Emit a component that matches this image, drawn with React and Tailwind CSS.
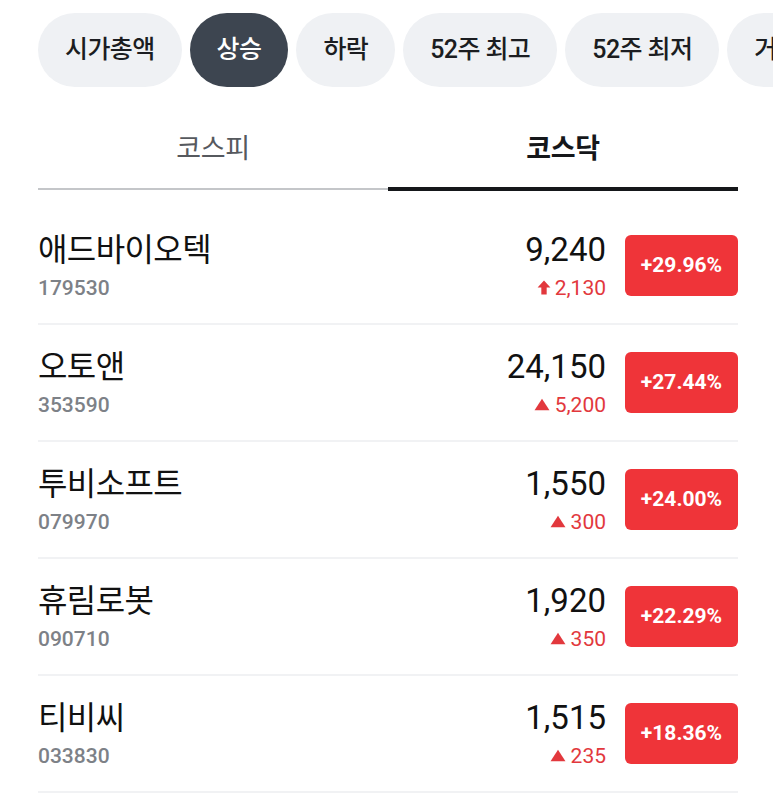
import React from "react";

const pills = ["시가총액", "상승", "하락", "52주 최고", "52주 최저", "거래대금"];

const rows = [
  { name: "애드바이오텍", code: "179530", price: "9,240", change: "2,130", pct: "+29.96%", limit: true },
  { name: "오토앤", code: "353590", price: "24,150", change: "5,200", pct: "+27.44%" },
  { name: "투비소프트", code: "079970", price: "1,550", change: "300", pct: "+24.00%" },
  { name: "휴림로봇", code: "090710", price: "1,920", change: "350", pct: "+22.29%" },
  { name: "티비씨", code: "033830", price: "1,515", change: "235", pct: "+18.36%" },
];

const font = { fontFamily: "Roboto, 'Noto Sans CJK KR', sans-serif" };

function UpArrow() {
  return (
    <svg width="14" height="15" viewBox="0 0 13 14" className="mr-[4px]">
      <path d="M6.5 0.5 L12.5 7 L9 7 L9 13.5 L4 13.5 L4 7 L0.5 7 Z" fill="#e2383d" />
    </svg>
  );
}

function Triangle() {
  return (
    <svg width="16" height="13" viewBox="0 0 15 12" className="mr-[5px]">
      <path d="M7.5 0.5 L14.5 11.5 L0.5 11.5 Z" fill="#e2383d" />
    </svg>
  );
}

export default function App() {
  return (
    <div className="w-[773px] h-[795px] overflow-hidden bg-white" style={font}>
      <div className="flex gap-[8px] pl-[38px] pt-[13px] whitespace-nowrap">
        {pills.map((p, i) => (
          <div
            key={p}
            className={
              "h-[74px] shrink-0 rounded-full flex items-center justify-center px-[27px] text-[25px] font-medium tracking-[-0.6px] " +
              (i === 1 ? "bg-[#3d4550] text-white" : "bg-[#eff1f4] text-[#1b1d21]")
            }
          >
            {p}
          </div>
        ))}
      </div>

      <div className="ml-[38px] mr-[35px] mt-[29px] flex">
        <div className="flex-1 flex flex-col items-center">
          <div className="h-[71px] flex items-center text-[27px] text-[#56595e] pt-[2px] pb-[6px] tracking-[-0.3px]">코스피</div>
          <div className="w-full h-[2px] mt-[1px] bg-[#c4c6c9]" />
        </div>
        <div className="flex-1 flex flex-col items-center">
          <div className="h-[71px] flex items-center text-[27px] font-bold text-[#15171a] pt-[2px] pb-[6px] tracking-[-0.3px]">코스닥</div>
          <div className="w-full h-[4px] bg-[#15171a]" />
        </div>
      </div>

      <div className="ml-[38px] mr-[35px] mt-[17px]">
        {rows.map((r) => (
          <div key={r.code} className="h-[117px] border-b-[2px] border-[#f1f2f4] flex items-center">
            <div className="flex-1 flex flex-col pt-[4px]">
              <div className="text-[32px] leading-[40px] text-[#111] tracking-[-0.6px]">{r.name}</div>
              <div className="text-[21px] leading-[36px] font-medium text-[#7d8187]">{r.code}</div>
            </div>
            <div className="flex flex-col items-end pt-[4px]">
              <div className="text-[33px] leading-[40px] text-[#111]">{r.price}</div>
              <div className="flex items-center text-[21px] leading-[36px] text-[#e2383d]">
                {r.limit ? <UpArrow /> : <Triangle />}
                {r.change}
              </div>
            </div>
            <div className="ml-[19px] w-[113px] h-[61px] rounded-[6px] bg-[#ef3439] flex items-center justify-center text-white text-[21px] font-bold">
              {r.pct}
            </div>
          </div>
        ))}
      </div>
    </div>
  );
}
